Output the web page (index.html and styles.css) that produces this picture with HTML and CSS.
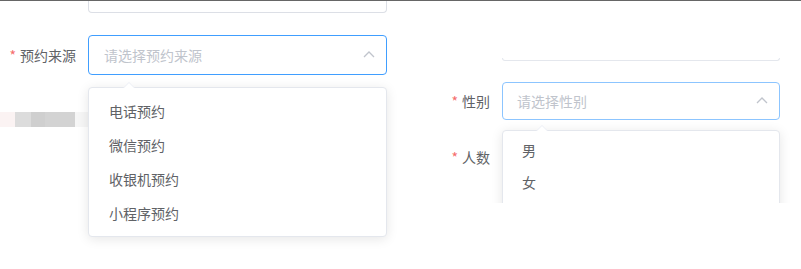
FILE: index.html
```html
<!DOCTYPE html>
<html lang="zh-CN">
<head>
    <meta charset="UTF-8">
    <meta name="viewport" content="width=device-width, initial-scale=1.0">
    <title>预约</title>
    <link rel="stylesheet" href="styles.css">
</head>
<body>
    <div class="form">
        <div class="col col-left">
            <div class="stub"></div>
            <div class="form-item">
                <label class="label"><span class="req">*</span>预约来源</label>
                <div class="select is-focus">
                    <span class="placeholder">请选择预约来源</span>
                    <svg class="caret" width="12" height="8" viewBox="0 0 12 8"><polyline points="1,7 6,2 11,7" fill="none" stroke="#c0c4cc" stroke-width="1.3"/></svg>
                </div>
            </div>
            <div class="mosaic">
                <span class="m1"></span><span class="m2"></span><span class="m3"></span><span class="m4"></span><span class="m5"></span>
            </div>
            <div class="dropdown dropdown-source">
                <ul class="options">
                    <li>电话预约</li>
                    <li>微信预约</li>
                    <li>收银机预约</li>
                    <li>小程序预约</li>
                </ul>
            </div>
        </div>

        <div class="col col-right">
            <div class="stub stub-right"></div>
            <div class="form-item">
                <label class="label"><span class="req">*</span>性别</label>
                <div class="select select-sm is-focus-light">
                    <span class="placeholder">请选择性别</span>
                    <svg class="caret" width="12" height="8" viewBox="0 0 12 8"><polyline points="1,7 6,2 11,7" fill="none" stroke="#c0c4cc" stroke-width="1.3"/></svg>
                </div>
            </div>
            <div class="form-item item-count">
                <label class="label"><span class="req">*</span>人数</label>
            </div>
            <div class="dropdown dropdown-gender">
                <ul class="options options-sm">
                    <li>男</li>
                    <li>女</li>
                </ul>
            </div>
        </div>
    </div>
</body>
</html>
```

FILE: styles.css
```css
* {
    box-sizing: border-box;
}

body {
    margin: 0;
    border-top: 1px solid #666;
    font-family: "Noto Sans CJK SC", "Microsoft YaHei", sans-serif;
    font-size: 14px;
    color: #606266;
    background: #fff;
}

.form {
    display: grid;
    grid-template-columns: 400px 1fr;
    align-items: start;
    min-height: 268px;
}

.col {
    position: relative;
    display: flex;
    flex-direction: column;
}

.col-left {
    height: 268px;
}

.col-right {
    height: 202px;
    overflow: hidden;
}

.stub {
    margin-left: 88px;
    width: 299px;
    height: 12px;
    border: 1px solid #dcdfe6;
    border-top: none;
    border-radius: 0 0 4px 4px;
}

.stub-right {
    margin-left: 102px;
    margin-top: 57px;
    width: 278px;
    height: 3px;
    border-color: #e4e7ed;
}

.form-item {
    display: flex;
    align-items: center;
    margin-top: 22px;
}

.col-left .label {
    width: 88px;
}

.col-right .form-item {
    margin-top: 21px;
}

.col-right .label {
    width: 102px;
}

.label {
    text-align: right;
    padding-right: 12px;
    line-height: 20px;
    color: #606266;
}

.req {
    color: #f56c6c;
    margin-right: 4px;
}

.select {
    position: relative;
    width: 299px;
    height: 40px;
    border: 1px solid #409eff;
    border-radius: 4px;
    display: flex;
    align-items: center;
    padding: 0 15px;
}

.select-sm {
    width: 278px;
    height: 38px;
    padding: 0 14px;
}

.is-focus-light {
    border-color: #8cc5ff;
}

.placeholder {
    color: #c0c4cc;
}

.caret {
    position: absolute;
    right: 11px;
    top: 50%;
    margin-top: -5px;
}

.col-right .item-count {
    margin-top: 0;
    padding-top: 18px;
    height: 56px;
}

.dropdown {
    position: absolute;
    background: #fff;
    border: 1px solid #e4e7ed;
    border-radius: 4px;
    box-shadow: 0 2px 12px 0 rgba(0, 0, 0, 0.1);
}

.dropdown::before,
.dropdown::after {
    content: "";
    position: absolute;
    width: 0;
    height: 0;
    border: 6px solid transparent;
    border-top-width: 0;
}

.dropdown::before {
    top: -6px;
    border-bottom-color: #ebeef5;
}

.dropdown::after {
    top: -5px;
    border-bottom-color: #fff;
}

.dropdown-source {
    top: 86px;
    left: 88px;
    width: 299px;
}

.dropdown-source::before,
.dropdown-source::after {
    left: 34px;
}

.dropdown-gender {
    top: 129px;
    left: 102px;
    width: 278px;
    height: 90px;
}

.dropdown-gender::before,
.dropdown-gender::after {
    left: 33px;
}

.options {
    list-style: none;
    margin: 0;
    padding: 6px 0;
}

.options li {
    height: 34px;
    line-height: 34px;
    padding: 0 20px;
    color: #606266;
}

.options-sm {
    padding-top: 3px;
}

.options-sm li {
    height: 32px;
    line-height: 32px;
    padding: 0 19px;
}

.mosaic {
    position: absolute;
    top: 111px;
    left: 0;
    display: flex;
    height: 15px;
}

.mosaic span {
    display: block;
    height: 100%;
}

.m1 { width: 15px; background: #fbf3f3; }
.m2 { width: 16px; background: #dcdcdc; }
.m3 { width: 14px; background: #cfcfcf; }
.m4 { width: 30px; background: #d3d3d3; }
.m5 { width: 14px; background: #f6f6f6; }
```
